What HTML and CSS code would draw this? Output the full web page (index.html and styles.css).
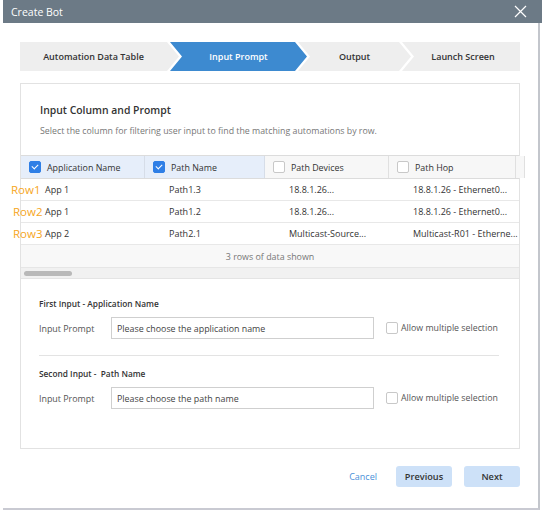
FILE: index.html
```html
<!DOCTYPE html>
<html lang="en">
<head>
    <meta charset="UTF-8">
    <meta name="viewport" content="width=device-width, initial-scale=1.0">
    <title>Create Bot</title>
    <link rel="stylesheet" href="styles.css">
</head>
<body>

    <div class="modal">
        <div class="modal-header">
            <span class="modal-title">Create Bot</span>
            <svg class="close-icon" width="13" height="13" viewBox="0 0 13 13">
                <path d="M1 1 L12 12 M12 1 L1 12" stroke="#fff" stroke-width="1.2" fill="none"/>
            </svg>
        </div>

        <div class="modal-content">
            <div class="modal-body">

                <!-- Wizard steps -->
                <div class="stepper">
                    <div class="step step-first">Automation Data Table</div>
                    <div class="step step-active">Input Prompt</div>
                    <div class="step step-output">Output</div>
                    <div class="step step-last">Launch Screen</div>
                </div>

                <div class="card">
                    <div class="card-head">
                        <h2>Input Column and Prompt</h2>
                        <p>Select the column for filtering user input to find the matching automations by row.</p>
                    </div>

                    <!-- Data table -->
                    <div class="data-table">
                        <div class="row head-row">
                            <div class="cell head-cell selected"><span class="check checked"></span>Application Name</div>
                            <div class="cell head-cell selected"><span class="check checked"></span>Path Name</div>
                            <div class="cell head-cell"><span class="check"></span>Path Devices</div>
                            <div class="cell head-cell"><span class="check"></span>Path Hop</div>
                            <div class="cell head-cell"></div>
                        </div>
                        <div class="row data-row">
                            <span class="row-label first">Row1</span>
                            <div class="cell">App 1</div>
                            <div class="cell">Path1.3</div>
                            <div class="cell">18.8.1.26...</div>
                            <div class="cell">18.8.1.26 - Ethernet0...</div>
                            <div class="cell"></div>
                        </div>
                        <div class="row data-row">
                            <span class="row-label">Row2</span>
                            <div class="cell">App 1</div>
                            <div class="cell">Path1.2</div>
                            <div class="cell">18.8.1.26...</div>
                            <div class="cell">18.8.1.26 - Ethernet0...</div>
                            <div class="cell"></div>
                        </div>
                        <div class="row data-row">
                            <span class="row-label">Row3</span>
                            <div class="cell">App 2</div>
                            <div class="cell">Path2.1</div>
                            <div class="cell">Multicast-Source...</div>
                            <div class="cell">Multicast-R01 - Etherne...</div>
                            <div class="cell"></div>
                        </div>
                        <div class="table-footer">3 rows of data shown</div>
                        <div class="scroll-track"><div class="scroll-thumb"></div></div>
                    </div>

                    <!-- Prompts -->
                    <div class="prompts">
                        <div class="prompt-group">
                            <div class="prompt-title">First Input - Application Name</div>
                            <div class="prompt-row">
                                <span class="prompt-label">Input Prompt</span>
                                <div class="prompt-input">Please choose the application name</div>
                                <span class="check"></span>
                                <span class="multi-label">Allow multiple selection</span>
                            </div>
                        </div>
                        <div class="prompt-group second">
                            <div class="prompt-title">Second Input -&nbsp; Path Name</div>
                            <div class="prompt-row">
                                <span class="prompt-label">Input Prompt</span>
                                <div class="prompt-input">Please choose the path name</div>
                                <span class="check"></span>
                                <span class="multi-label">Allow multiple selection</span>
                            </div>
                        </div>
                    </div>
                </div>
            </div>

            <div class="modal-footer">
                <a class="cancel-link">Cancel</a>
                <button class="btn">Previous</button>
                <button class="btn">Next</button>
            </div>
        </div>
    </div>

</body>
</html>
```

FILE: styles.css
```css
/* General */
body {
    margin: 0;
    padding: 0;
    font-family: 'Open Sans', 'Liberation Sans', sans-serif;
    background: #fff;
    color: #333;
}

.modal {
    margin-left: 3px;
    width: 539px;
}

/* Header */
.modal-header {
    height: 23px;
    background: #6c7a86;
    display: flex;
    align-items: center;
    justify-content: space-between;
    padding: 0 15px 0 8px;
}
.modal-title {
    color: #fff;
    font-size: 10.5px;
}
.close-icon {
    display: block;
}

.modal-content {
    width: 535px;
    height: 485px;
    border-right: 2px solid #c3c6cc;
    border-bottom: 2px solid #c9cad2;
    display: flex;
    flex-direction: column;
}
.modal-body {
    padding: 19px 18px 0 17px;
}

/* Stepper */
.stepper {
    display: flex;
    height: 29px;
}
.step {
    box-sizing: border-box;
    flex-shrink: 0;
    background: #eeeeee;
    color: #333;
    font-size: 9px;
    font-weight: 600;
    white-space: nowrap;
    display: flex;
    align-items: center;
    justify-content: center;
    padding: 0 12px;
    margin-left: -9px;
    clip-path: polygon(0 0, calc(100% - 12px) 0, 100% 50%, calc(100% - 12px) 100%, 0 100%, 12px 50%);
}
.step-first {
    margin-left: 0;
    width: 159px;
    padding-left: 0;
    clip-path: polygon(0 0, calc(100% - 12px) 0, 100% 50%, calc(100% - 12px) 100%, 0 100%);
}
.step-active {
    width: 137px;
    background: #3d8ad0;
    color: #fff;
}
.step-output {
    width: 113px;
}
.step-last {
    flex: 1;
    padding-right: 8px;
    clip-path: polygon(0 0, 100% 0, 100% 100%, 0 100%, 12px 50%);
}

/* Card */
.card {
    margin-top: 12px;
    height: 364px;
    border: 1px solid #e2e2e2;
}
.card-head {
    padding: 18px 19px 0;
}
.card-head h2 {
    margin: 0;
    font-size: 10.4px;
    line-height: 16px;
    font-weight: 600;
    color: #333;
}
.card-head p {
    margin: 6px 0 0;
    font-size: 8.8px;
    line-height: 14px;
    color: #777;
}

/* Table */
.data-table {
    margin-top: 17px;
    border-top: 1px solid #dcdcdc;
}
.row {
    display: grid;
    grid-template-columns: 124px 120px 124px 127px 1fr;
    position: relative;
}
.cell {
    font-size: 9px;
    color: #333;
    display: flex;
    align-items: center;
    padding-left: 24px;
    white-space: nowrap;
}
.head-row {
    height: 22px;
    border-bottom: 1px solid #dcdcdc;
}
.head-cell {
    background: #f7f7f7;
    padding-left: 8px;
    gap: 6px;
    font-size: 8.9px;
    border-right: 1px solid #e0e0e0;
}
.head-cell.selected {
    background: #e6eefa;
    border-right-color: #d6dde8;
}
.data-row {
    height: 21px;
    border-bottom: 1px solid #e8e8e8;
}
.row-label {
    position: absolute;
    left: -8px;
    top: 3px;
    font-size: 11.5px;
    color: #f6a623;
}
.row-label.first {
    left: -10px;
}
.table-footer {
    height: 22px;
    background: #f8f8f8;
    border-bottom: 1px solid #e6e6e6;
    display: flex;
    align-items: center;
    justify-content: center;
    font-size: 8.9px;
    color: #777;
}
.scroll-track {
    height: 10px;
    background: #f1f1f1;
    border-bottom: 1px solid #e4e4e4;
    display: flex;
    align-items: center;
    padding-left: 3px;
}
.scroll-thumb {
    width: 48px;
    height: 5px;
    border-radius: 3px;
    background: #b9b9b9;
}

/* Checkboxes */
.check {
    width: 10px;
    height: 10px;
    border: 1px solid #c8c8c8;
    border-radius: 2px;
    background: #fff;
    flex-shrink: 0;
    position: relative;
}
.check.checked {
    background: #2f7fe6;
    border-color: #2f7fe6;
}
.check.checked::after {
    content: "";
    position: absolute;
    left: 3px;
    top: 1px;
    width: 3px;
    height: 5px;
    border-right: 1.4px solid #fff;
    border-bottom: 1.4px solid #fff;
    transform: rotate(45deg);
}

/* Prompts */
.prompts {
    padding: 19px 20px 0 18px;
}
.prompt-title {
    font-size: 8.3px;
    font-weight: 600;
    line-height: 12px;
    color: #333;
}
.prompt-row {
    display: flex;
    align-items: center;
    margin-top: 7px;
}
.prompt-label {
    width: 72px;
    font-size: 8.9px;
    color: #555;
}
.prompt-input {
    width: 256px;
    height: 20px;
    border: 1px solid #cfcfcf;
    padding-left: 5px;
    font-size: 8.9px;
    color: #444;
    display: flex;
    align-items: center;
    margin-right: 12px;
}
.prompt-row .check {
    margin-right: 3px;
}
.multi-label {
    font-size: 8.8px;
    color: #555;
    white-space: nowrap;
}
.prompt-group {
    padding-bottom: 16px;
    border-bottom: 1px solid #e3e3e3;
}
.prompt-group.second {
    border-bottom: none;
    padding-top: 12px;
}

/* Footer */
.modal-footer {
    display: flex;
    justify-content: flex-end;
    align-items: center;
    padding: 17px 18px 0 0;
}
.cancel-link {
    color: #4a90d9;
    font-size: 9px;
    margin-right: 19px;
}
.btn {
    width: 56px;
    height: 21px;
    background: #cde1f8;
    border: none;
    border-radius: 3px;
    font-family: 'Open Sans', 'Liberation Sans', sans-serif;
    font-size: 9.2px;
    font-weight: 600;
    color: #333;
    margin-left: 12px;
}
.cancel-link + .btn {
    margin-left: 0;
}
```
